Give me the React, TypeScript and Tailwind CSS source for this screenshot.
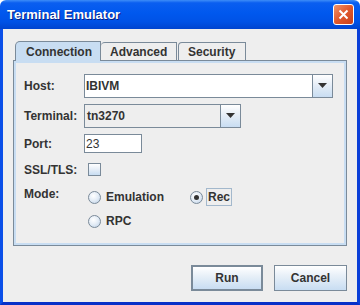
import React from "react"

const font = { fontFamily: '"Liberation Sans", Arial, sans-serif' }

function Arrow() {
  return (
    <svg width="9" height="6" viewBox="0 0 9 6" className="block">
      <polygon points="0,0 9,0 4.5,5" fill="#333333" />
    </svg>
  )
}

function ArrowButton() {
  return (
    <div className="w-[20px] h-full flex items-center justify-center border-l border-[#7a8a99] bg-[linear-gradient(to_bottom,#ffffff_0%,#e6eef7_45%,#c8ddf2_100%)]">
      <Arrow />
    </div>
  )
}

function Radio({ checked, label, focused }: { checked?: boolean; label: string; focused?: boolean }) {
  return (
    <div className="flex items-center h-[18px]">
      <div className="w-[13px] h-[13px] rounded-full border border-[#7a8a99] bg-[radial-gradient(circle_at_40%_35%,#ffffff_0%,#e6eef7_45%,#bcd0e6_100%)] flex items-center justify-center">
        {checked && <div className="w-[5px] h-[5px] rounded-full bg-[#333333]" />}
      </div>
      <span
        className={
          "ml-[3px] px-[1px] text-[12px] font-bold text-[#333333] leading-[16px] border " +
          (focused ? "border-[#a3b8cc]" : "border-transparent")
        }
      >
        {label}
      </span>
    </div>
  )
}

export default function App() {
  return (
    <div className="w-[360px] h-[305px] flex flex-col overflow-hidden" style={font}>
      {/* title bar */}
      <div className="h-[29px] flex items-center justify-between pl-[7px] pr-[6px] rounded-t-[6px] bg-[linear-gradient(to_bottom,#3d8df8_0%,#0a5ef0_10%,#0058ee_45%,#0052e6_75%,#0044cf_100%)]">
        <span className="text-white font-bold text-[13px] [text-shadow:1px_1px_0_#0a1e80]">Terminal Emulator</span>
        <div className="w-[21px] h-[21px] rounded-[3px] border border-white bg-[linear-gradient(135deg,#f0946a_0%,#e0582c_50%,#c8401c_100%)] flex items-center justify-center">
          <svg width="11" height="11" viewBox="0 0 11 11">
            <path d="M1.5 1.5 L9.5 9.5 M9.5 1.5 L1.5 9.5" stroke="#ffffff" strokeWidth="2" />
          </svg>
        </div>
      </div>

      {/* body */}
      <div className="flex-1 flex flex-col bg-[#eeeeee] border-l-[3px] border-r-[3px] border-b-[3px] border-l-[#0a4fe8] border-r-[#0a3fd8] border-b-[#0730c8] px-[10px] pt-[12px]">
        {/* tabs */}
        <div className="flex items-start h-[20px] pl-[2px] relative z-10 -mb-px">
          <div className="h-[20px] w-[86px] pl-[10px] flex items-center bg-[#c8ddf2] border-t border-l border-r border-[#7a8a99] rounded-tl-[5px] text-[12px] font-bold text-[#333333]">
            Connection
          </div>
          <div className="h-[18px] mt-[1px] w-[76px] pl-[9px] flex items-center border-t border-r border-[#7a8a99] rounded-tl-[4px] text-[12px] font-bold text-[#333333] bg-[#eeeeee]">
            Advanced
          </div>
          <div className="h-[18px] mt-[1px] w-[68px] ml-[1px] pl-[9px] flex items-center border-t border-l border-r border-[#7a8a99] rounded-tl-[4px] text-[12px] font-bold text-[#333333] bg-[#eeeeee]">
            Security
          </div>
        </div>

        {/* panel */}
        <div className="h-[186px] border border-[#7a8a99]">
          <div className="h-full border-2 border-[#c8ddf2] pl-[8px] pt-[11px] text-[#333333]">
            <div className="flex items-center h-[24px]">
              <span className="w-[60px] text-[12px] font-bold">Host:</span>
              <div className="w-[249px] h-[24px] flex border border-[#7a8a99] bg-white">
                <div className="flex-1 flex items-center pl-[1px] text-[12px] font-bold">IBIVM</div>
                <ArrowButton />
              </div>
            </div>

            <div className="flex items-center h-[24px] mt-[6px]">
              <span className="w-[60px] text-[12px] font-bold">Terminal:</span>
              <div className="w-[157px] h-[24px] flex border border-[#7a8a99] bg-[#eeeeee]">
                <div className="flex-1 flex items-center pl-[2px] text-[12px] font-bold">tn3270</div>
                <ArrowButton />
              </div>
            </div>

            <div className="flex items-center h-[19px] mt-[6px]">
              <span className="w-[60px] text-[12px] font-bold">Port:</span>
              <div className="w-[58px] h-[19px] flex items-center border border-[#7a8a99] bg-white pl-[1px] text-[12px]">
                23
              </div>
            </div>

            <div className="flex items-center h-[13px] mt-[10px]">
              <span className="w-[64px] text-[12px] font-bold">SSL/TLS:</span>
              <div className="w-[13px] h-[13px] border border-[#7a8a99] bg-[linear-gradient(to_bottom,#ffffff_0%,#e6eef7_50%,#c8ddf2_100%)]" />
            </div>

            <div className="flex mt-[12px]">
              <span className="w-[64px] text-[12px] font-bold leading-[14px] -mt-[1px]">Mode:</span>
              <div className="flex flex-col gap-[6px]">
                <div className="flex">
                  <div className="w-[102px]">
                    <Radio label="Emulation" />
                  </div>
                  <Radio label="Rec" checked focused />
                </div>
                <Radio label="RPC" />
              </div>
            </div>
          </div>
        </div>

        {/* buttons */}
        <div className="flex justify-end gap-[11px] mt-[19px]">
          <button className="w-[72px] h-[26px] border-2 border-[#7a8a99] bg-[linear-gradient(to_bottom,#ffffff_0%,#e8f0f8_40%,#c8ddf2_100%)] text-[12px] font-bold text-[#333333]">
            Run
          </button>
          <button className="w-[73px] h-[26px] border border-[#7a8a99] bg-[linear-gradient(to_bottom,#ffffff_0%,#e8f0f8_40%,#c8ddf2_100%)] text-[12px] font-bold text-[#333333]">
            Cancel
          </button>
        </div>
      </div>
    </div>
  )
}
